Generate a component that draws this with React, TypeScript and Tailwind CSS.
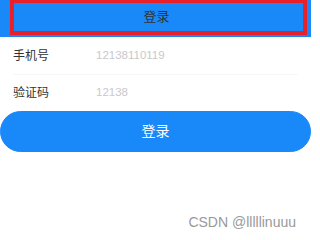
import React from 'react'

const font = { fontFamily: '"Liberation Sans", "Noto Sans CJK SC", sans-serif' }

function Field({ label, value }: { label: string; value: string }) {
  return (
    <div className="flex h-[37px] items-center pl-[13px] text-[12px]">
      <span className="w-[83px] text-[#323233]">{label}</span>
      <span className="text-[11.5px] text-[#c8c9cc]">{value}</span>
    </div>
  )
}

export default function App() {
  return (
    <div className="h-[238px] w-[311px] overflow-hidden bg-white" style={font}>
      <div className="h-[37px] bg-[#1989fa] pl-[10px] pr-[4px]">
        <div className="flex h-[35px] items-center justify-center border-x-[4px] border-b-[4px] border-t-[3px] border-[#e8202a] pr-[4px] text-[13px] text-[#323233]">
          登录
        </div>
      </div>

      <Field label="手机号" value="12138110119" />
      <div className="mx-[13px] border-t border-[#f5f6f7]" />
      <div className="-mt-px">
        <Field label="验证码" value="12138" />
      </div>

      <button className="flex h-[41px] w-full items-center justify-center rounded-full border border-[#1989fa] bg-[#1989fa] text-[14px] text-white">
        登录
      </button>

      <div className="mt-[60px] pr-[15px] text-right text-[14px] leading-[20px] text-[#999999]">
        CSDN @lllllinuuu
      </div>
    </div>
  )
}
